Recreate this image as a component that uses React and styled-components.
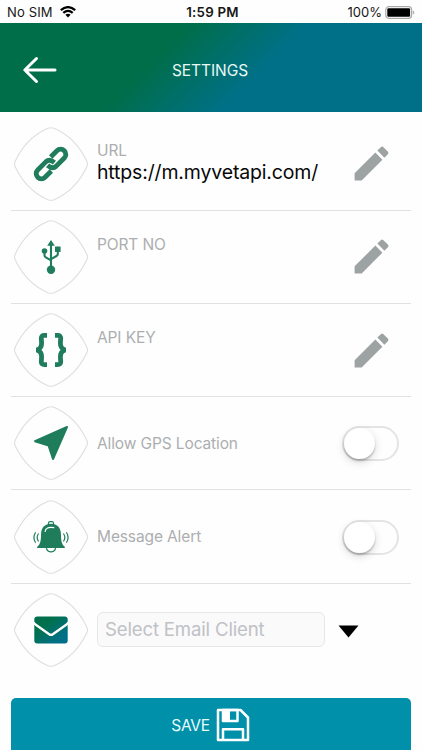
import React from "react";
import styled, { createGlobalStyle } from "styled-components";
import { MdEdit } from "react-icons/md";

const GREEN = "#1f7d5c";

const GlobalStyle = createGlobalStyle`
  * { box-sizing: border-box; }
  body { margin: 0; background: #fff; overflow: hidden; }
  button, input { font-family: inherit; }
  svg { display: block; flex: none; }
`;

const Screen = styled.div`
  width: 422px;
  height: 750px;
  display: flex;
  flex-direction: column;
  background: #fefefe;
  overflow: hidden;
  font-family: Inter, "Liberation Sans", sans-serif;
`;

const StatusBar = styled.div`
  height: 23px;
  flex: none;
  display: grid;
  grid-template-columns: 1fr auto 1fr;
  align-items: center;
  padding: 1px 7px 0 7px;
  color: #161616;
  font-size: 13px;
  line-height: 20px;
`;

const StatusSide = styled.div`
  display: flex;
  align-items: center;
  gap: ${(p) => p.$gap}px;
  justify-content: ${(p) => (p.$end ? "flex-end" : "flex-start")};
  letter-spacing: ${(p) => p.$track}px;
`;

const Clock = styled.div`
  font-size: 13.3px;
  font-weight: 600;
  letter-spacing: 0.25px;
  transform: translateX(1.5px);
`;

const Header = styled.header`
  height: 89px;
  flex: none;
  display: grid;
  grid-template-columns: 57px 1fr 57px;
  align-items: center;
  padding-top: 4px;
  background: linear-gradient(135deg, #006e48 0%, #006e48 37%, #007089 61%, #007089 100%);
`;

const BackButton = styled.button`
  border: 0;
  padding: 0 0 0 22px;
  background: none;
`;

const Title = styled.h1`
  margin: 0;
  padding: 3px 2px 0 0;
  text-align: center;
  font-size: 15.5px;
  font-weight: 400;
  line-height: 20px;
  letter-spacing: -0.05px;
  color: #e9f8f4;
`;

const List = styled.main`
  display: flex;
  flex-direction: column;
  padding: 5.4px 11px 0;
`;

const Row = styled.section`
  height: 93.25px;
  flex: none;
  display: flex;
  align-items: center;
  padding-left: 3px;
  border-bottom: 1.5px solid ${(p) => (p.$last ? "transparent" : "#e1e2e2")};
`;

const Badge = styled.div`
  width: 74px;
  height: 74px;
  flex: none;
  display: grid;
  margin-right: 9px;
  > * { grid-area: 1 / 1; place-self: center; }
`;

const Field = styled.div`
  flex: 1;
  height: 93px;
  padding-top: ${(p) => p.$top}px;
`;

const Label = styled.div`
  font-size: 15.5px;
  line-height: 21px;
  letter-spacing: -0.12px;
  color: #acaeb0;
  white-space: nowrap;
`;

const Value = styled.div`
  font-size: 19.5px;
  line-height: 22px;
  letter-spacing: -0.16px;
  color: #080808;
  white-space: nowrap;
`;

const EditButton = styled.button`
  border: 0;
  padding: 0 17px 0 0;
  background: none;
  color: #9da2a3;
`;

const Switch = styled.button`
  width: 57px;
  height: 35px;
  margin: 1px 12px 0 0;
  padding: 0;
  border: 2px solid #e4e4e5;
  border-radius: 18px;
  background: #fefefe;
`;

const Knob = styled.span`
  display: block;
  width: 31px;
  height: 31px;
  border-radius: 50%;
  background: #fff;
  box-shadow: 0 2px 2px rgba(0, 0, 0, 0.2), 0 3px 8px rgba(0, 0, 0, 0.16);
`;

const Select = styled.div`
  width: 228px;
  height: 35px;
  padding-left: 7px;
  border: 1px solid #e6e7e8;
  border-radius: 6px;
  background: #fafafb;
  color: #c0c1c5;
  font-size: 18.6px;
  line-height: 32px;
  letter-spacing: -0.17px;
  white-space: nowrap;
`;

const Caret = styled.svg`
  margin: 3px 0 0 13px;
`;

const SaveButton = styled.button`
  height: 60px;
  flex: none;
  display: flex;
  align-items: center;
  justify-content: center;
  gap: 6.5px;
  margin: 21.1px 11px 0;
  padding: 0 0.5px 5px 0;
  border: 0;
  border-radius: 5px;
  background: #0090aa;
  color: #e9fbff;
  font-size: 15.5px;
  letter-spacing: -0.3px;
`;

function WifiIcon() {
  return (
    <svg width="16" height="12" viewBox="0 0 16 12" fill="none" stroke="#000" strokeWidth="2.2">
      <path d="M.8 4.2Q8-2 15.2 4.2M3.3 6.9Q8 2.9 12.7 6.9" />
      <path d="M5.4 8.8Q8 6.9 10.6 8.8L8 11.6Z" fill="#000" stroke="none" />
    </svg>
  );
}

function BatteryIcon() {
  return (
    <svg width="30" height="13" viewBox="0 0 30 13">
      <rect x=".8" y=".7" width="25.8" height="11.6" rx="3" fill="#fff" stroke="#aaa" strokeWidth="1.2" />
      <rect x="2.3" y="2.2" width="22.8" height="8.6" rx="1.2" />
      <path d="M27.8 4.6Q29.3 5 29.3 6.5T27.8 8.4Z" fill="#aaa" />
    </svg>
  );
}

function BackIcon() {
  return (
    <svg width="36" height="30" viewBox="0 0 36 30" fill="none" stroke="#fff" strokeWidth="3" strokeLinecap="round" strokeLinejoin="round">
      <path d="M33 15H3M14.5 3.5 2.8 15l11.7 11.5" />
    </svg>
  );
}

function Frame() {
  return (
    <svg width="74" height="74" viewBox="0 0 74 74" fill="none" stroke="#dedede" strokeWidth="1.1">
      <path d="M34 1.3Q37 .1 40 1.3Q61.5 10.5 72.7 34Q74.2 37 72.7 40Q61.5 63.5 40 72.7Q37 73.9 34 72.7Q12.5 63.5 1.3 40Q-.2 37 1.3 34Q12.5 10.5 34 1.3Z" />
    </svg>
  );
}

function LinkIcon() {
  return (
    <svg width="36" height="36" viewBox="-18 -18 36 36" fill="none" stroke={GREEN} strokeWidth="4.8">
      <g transform="rotate(-45)">
        <path d="M4.8-5.2H13.6A5.2 5.2 0 0 1 13.6 5.2H2.2Q-3 5-3.4-1.4" />
        <path d="M-4.8 5.2H-13.6A5.2 5.2 0 0 1-13.6-5.2H-2.2Q3-5 3.4 1.4" />
      </g>
    </svg>
  );
}

function UsbIcon() {
  return (
    <svg width="20" height="34" viewBox="0 0 20 34" fill={GREEN}>
      <path d="M10 0 13.8 5.8H6.2Z" />
      <circle cx="10" cy="29.8" r="4.2" />
      <circle cx="3.5" cy="11" r="2.8" />
      <rect x="14" y="6.4" width="5.6" height="5.6" rx=".5" />
      <path d="M10 4V29M3.5 11V15.2Q3.5 16.7 4.8 17.4L10 20.4M16.8 10.5V14Q16.8 15.4 15.5 16L10 19.2" fill="none" stroke={GREEN} strokeWidth="2.1" />
    </svg>
  );
}

function BracesIcon() {
  return (
    <svg width="30" height="34" viewBox="0 0 30 34" fill="none" stroke={GREEN} strokeWidth="4.8">
      <path d="M11 2.4H8.3Q5.2 2.4 5.3 5.4C5.4 8 6 10.5 5.2 13Q4.5 15.7 1 17Q4.5 18.3 5.2 21C6 23.5 5.4 26 5.3 28.6Q5.2 31.6 8.3 31.6H11" />
      <path d="M19 2.4H21.7Q24.8 2.4 24.7 5.4C24.6 8 24 10.5 24.8 13Q25.5 15.7 29 17Q25.5 18.3 24.8 21C24 23.5 24.6 26 24.7 28.6Q24.8 31.6 21.7 31.6H19" />
    </svg>
  );
}

function ArrowIcon() {
  return (
    <svg width="36" height="36" viewBox="0 0 36 36" fill={GREEN} stroke={GREEN} strokeWidth="2" strokeLinejoin="round">
      <path d="M34 2 2 16.2 15.6 20.6 20 34Z" />
    </svg>
  );
}

function BellIcon() {
  return (
    <svg width="36" height="34" viewBox="0 0 36 34" fill="none" stroke={GREEN} strokeWidth="1.2" strokeLinecap="round">
      <path d="M15.5 5V3.2Q15.5 1.7 17 1.7H19Q20.5 1.7 20.5 3.2V5M13.5 28.5Q14.5 31.8 18 31.8T22.5 28.5" />
      <path d="M18 3.7C11.6 3.7 8.3 8 8.1 13.4C7.9 20.5 7.5 24.2 4.2 26.7V28H31.8V26.7C28.5 24.2 28.1 20.5 27.9 13.4C27.7 8 24.4 3.7 18 3.7Z" fill={GREEN} stroke="none" />
      <path d="M12.1 11.5C12.6 8.2 15.2 6.7 20.8 7.6" stroke="#fff" />
      <path d="M5.3 14Q3 17.5 5.3 21M2.4 12.7Q-.6 17.5 2.4 22.3M30.7 14Q33 17.5 30.7 21M33.6 12.7Q36.6 17.5 33.6 22.3" />
    </svg>
  );
}

function MailIcon() {
  return (
    <svg width="34" height="28" viewBox="0 0 34 28">
      <defs>
        <linearGradient id="mail" x1="0" y1="0" x2="1" y2="1">
          <stop offset=".3" stopColor="#00704c" />
          <stop offset=".8" stopColor="#007088" />
        </linearGradient>
      </defs>
      <rect x=".3" y=".5" width="33.4" height="27" rx="3" fill="url(#mail)" />
      <path d="M-.5 6.5Q1 8.3 2.5 9.3L15.2 18.2Q17 19.5 18.8 18.2L31.5 9.3Q33 8.3 34.5 6.5" fill="none" stroke="#fff" strokeWidth="2.3" />
    </svg>
  );
}

function SaveIcon() {
  return (
    <svg width="34" height="34" viewBox="0 0 34 34" fill="none" stroke="#fff" strokeWidth="2.5" strokeLinejoin="round">
      <path d="M2 2H24.5L32 9.5V32H2Z" />
      <path d="M7 31V21.2H27V31" />
      <path d="M7 2H21.5V13H7Z" />
      <path d="M7 2H14V13H7Z" fill="#fff" stroke="none" />
    </svg>
  );
}

const Emblem = ({ children }) => (
  <Badge>
    <Frame />
    {children}
  </Badge>
);

const TextRow = ({ icon, label, value }) => (
  <Row>
    <Emblem>{icon}</Emblem>
    <Field $top={value ? 23 : 23.5}>
      <Label>{label}</Label>
      {value && <Value>{value}</Value>}
    </Field>
    <EditButton aria-label={`Edit ${label}`}>
      <MdEdit size={45} />
    </EditButton>
  </Row>
);

const ToggleRow = ({ icon, label }) => (
  <Row>
    <Emblem>{icon}</Emblem>
    <Field $top={35.8}>
      <Label>{label}</Label>
    </Field>
    <Switch role="switch" aria-checked="false" aria-label={label}>
      <Knob />
    </Switch>
  </Row>
);

export default function App() {
  return (
    <Screen>
      <GlobalStyle />
      <StatusBar>
        <StatusSide $gap={7} $track={0.15}>
          No SIM
          <WifiIcon />
        </StatusSide>
        <Clock>1:59 PM</Clock>
        <StatusSide $end $gap={3} $track={0}>
          100%
          <BatteryIcon />
        </StatusSide>
      </StatusBar>
      <Header>
        <BackButton aria-label="Back">
          <BackIcon />
        </BackButton>
        <Title>SETTINGS</Title>
      </Header>
      <List>
        <TextRow icon={<LinkIcon />} label="URL" value="https://m.myvetapi.com/" />
        <TextRow icon={<UsbIcon />} label="PORT NO" />
        <TextRow icon={<BracesIcon />} label="API KEY" />
        <ToggleRow icon={<ArrowIcon />} label="Allow GPS Location" />
        <ToggleRow icon={<BellIcon />} label="Message Alert" />
        <Row $last>
          <Emblem>
            <MailIcon />
          </Emblem>
          <Select>Select Email Client</Select>
          <Caret width="21" height="13" viewBox="0 0 21 13">
            <path d="M.5.5H20.5L10.5 12.5Z" />
          </Caret>
        </Row>
      </List>
      <SaveButton>
        SAVE
        <SaveIcon />
      </SaveButton>
    </Screen>
  );
}
